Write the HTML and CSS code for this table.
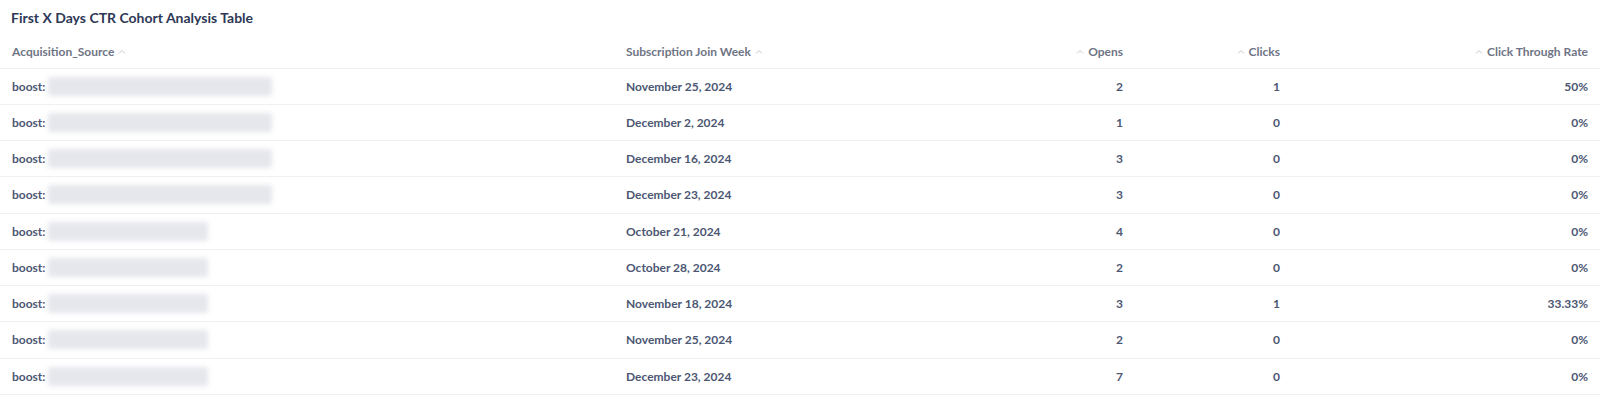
FILE: index.html
```html
<!DOCTYPE html>
<html>
<head>
<meta charset="utf-8">
<link rel="stylesheet" href="styles.css">
</head>
<body>
<div class="card">
  <div class="title">First X Days CTR Cohort Analysis Table</div>
  <div class="table">
    <div class="row head">
      <div class="cell">Acquisition_Source <svg class="chev" viewBox="0 0 8 5"><path d="M1 4.5 L4 1.5 L7 4.5"/></svg></div>
      <div class="cell">Subscription Join Week <svg class="chev" viewBox="0 0 8 5"><path d="M1 4.5 L4 1.5 L7 4.5"/></svg></div>
      <div class="cell num"><svg class="chev" viewBox="0 0 8 5"><path d="M1 4.5 L4 1.5 L7 4.5"/></svg> Opens</div>
      <div class="cell num"><svg class="chev" viewBox="0 0 8 5"><path d="M1 4.5 L4 1.5 L7 4.5"/></svg> Clicks</div>
      <div class="cell num"><svg class="chev" viewBox="0 0 8 5"><path d="M1 4.5 L4 1.5 L7 4.5"/></svg> Click Through Rate</div>
    </div>
    <div class="row"><div class="cell">boost: <span class="blur long"></span></div><div class="cell">November 25, 2024</div><div class="cell num">2</div><div class="cell num">1</div><div class="cell num">50%</div></div>
    <div class="row"><div class="cell">boost: <span class="blur long"></span></div><div class="cell">December 2, 2024</div><div class="cell num">1</div><div class="cell num">0</div><div class="cell num">0%</div></div>
    <div class="row"><div class="cell">boost: <span class="blur long"></span></div><div class="cell">December 16, 2024</div><div class="cell num">3</div><div class="cell num">0</div><div class="cell num">0%</div></div>
    <div class="row"><div class="cell">boost: <span class="blur long"></span></div><div class="cell">December 23, 2024</div><div class="cell num">3</div><div class="cell num">0</div><div class="cell num">0%</div></div>
    <div class="row"><div class="cell">boost: <span class="blur short"></span></div><div class="cell">October 21, 2024</div><div class="cell num">4</div><div class="cell num">0</div><div class="cell num">0%</div></div>
    <div class="row"><div class="cell">boost: <span class="blur short"></span></div><div class="cell">October 28, 2024</div><div class="cell num">2</div><div class="cell num">0</div><div class="cell num">0%</div></div>
    <div class="row"><div class="cell">boost: <span class="blur short"></span></div><div class="cell">November 18, 2024</div><div class="cell num">3</div><div class="cell num">1</div><div class="cell num">33.33%</div></div>
    <div class="row"><div class="cell">boost: <span class="blur short"></span></div><div class="cell">November 25, 2024</div><div class="cell num">2</div><div class="cell num">0</div><div class="cell num">0%</div></div>
    <div class="row"><div class="cell">boost: <span class="blur short"></span></div><div class="cell">December 23, 2024</div><div class="cell num">7</div><div class="cell num">0</div><div class="cell num">0%</div></div>
  </div>
</div>
</body>
</html>
```

FILE: styles.css
```css
* { box-sizing: border-box; }
html, body { margin: 0; padding: 0; background: #fff; }
body {
  font-family: Lato, "Open Sans", sans-serif;
  -webkit-font-smoothing: antialiased;
}
.card { width: 1600px; }
.title {
  height: 34px;
  padding: 0 11px;
  display: flex;
  align-items: center;
  font-size: 14px;
  font-weight: 700;
  color: #2e3856;
}
.table { display: flex; flex-direction: column; }
.row {
  display: grid;
  grid-template-columns: 614px 286px 235px 157px 1fr;
  height: 36.25px;
  border-bottom: 1px solid #f0f0f3;
}
.row.head { height: 34.5px; padding-top: 1px; }
.cell {
  display: flex;
  align-items: center;
  padding: 0 12px;
  font-size: 12px;
  font-weight: 700;
  color: #4c5773;
  white-space: nowrap;
}
.head .cell {
  color: #6f7585;
  font-weight: 700;
  gap: 4px;
}
.cell.num { justify-content: flex-end; }
.chev {
  width: 8px;
  height: 5px;
  fill: none;
  stroke: #c5c8d0;
  stroke-width: 1;
}
.blur {
  display: inline-block;
  height: 19px;
  margin-left: 3px;
  background: #e6e7ec;
  border-radius: 2px;
  filter: blur(2.5px);
}
.blur.long { width: 224px; }
.blur.short { width: 160px; }
```
